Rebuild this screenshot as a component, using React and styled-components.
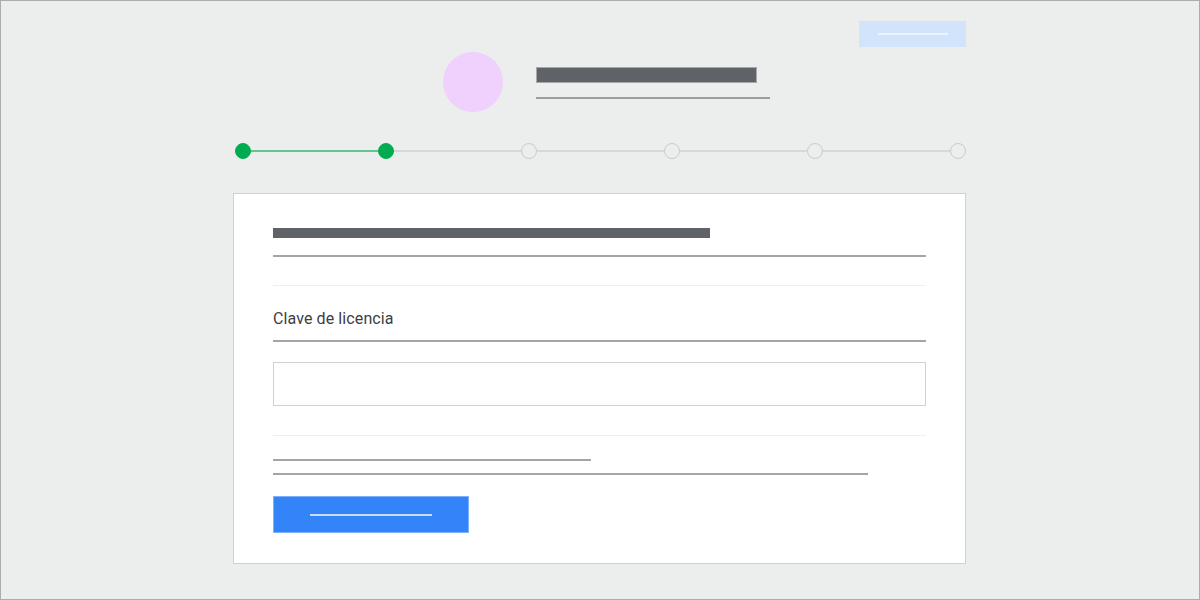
import React from "react";
import styled, { createGlobalStyle } from "styled-components";

const GlobalStyle = createGlobalStyle`
  * { box-sizing: border-box; }
  html, body { margin: 0; padding: 0; }
  body {
    background: #eceeed;
    font-family: Roboto, "Liberation Sans", Arial, sans-serif;
  }
`;

const Frame = styled.div`
  width: 1200px;
  height: 600px;
  border: 1px solid #a9adad;
  background: #eceeed;
  overflow: hidden;
`;

const Column = styled.div`
  width: 733px;
  margin-left: 232px;
  padding-top: 20px;
  display: flex;
  flex-direction: column;
`;

const TopBar = styled.div`
  display: flex;
  justify-content: flex-end;
  height: 26px;
`;

const GhostButton = styled.div`
  width: 107px;
  height: 26px;
  background: #d2e3fc;
  display: flex;
  align-items: center;
  justify-content: center;
`;

const Stroke = styled.div`
  width: ${(p) => p.$w}px;
  height: ${(p) => p.$h || 1}px;
  background: ${(p) => p.$c};
`;

const Header = styled.div`
  margin-top: 5px;
  height: 60px;
  display: flex;
  align-items: center;
  justify-content: center;
  gap: 33px;
  padding-left: 14px;
`;

const Avatar = styled.div`
  width: 60px;
  height: 60px;
  border-radius: 50%;
  background: #f0d0fc;
`;

const HeaderText = styled.div`
  display: flex;
  flex-direction: column;
  gap: 14px;
  padding-top: 1px;
`;

const TitleBar = styled.div`
  width: 221px;
  height: 16px;
  background: #5f6368;
  border: 1px solid #a4a8ac;
`;

const Stepper = styled.div`
  margin-top: 31px;
  height: 16px;
  display: flex;
  align-items: center;
  padding: 0 0 0 2px;
`;

const Dot = styled.div`
  width: 16px;
  height: 16px;
  border-radius: 50%;
  flex-shrink: 0;
  background: ${(p) => (p.$done ? "#00ac4f" : "#eceeed")};
  border: 1.5px solid ${(p) => (p.$done ? "#00ac4f" : "#c9cbcc")};
`;

const Link = styled.div`
  flex: 1;
  height: 2px;
  background: ${(p) => (p.$done ? "#62c58c" : "#d6d8d8")};
`;

const Card = styled.div`
  margin-top: 34px;
  height: 371px;
  background: #ffffff;
  border: 1px solid #cdd1d1;
  padding: 34px 39px 0 39px;
  display: flex;
  flex-direction: column;
`;

const HeadingBar = styled.div`
  width: 437px;
  height: 10px;
  background: #5f6368;
`;

const Rule = styled.div`
  height: ${(p) => p.$h || 2}px;
  width: ${(p) => (p.$w ? `${p.$w}px` : "100%")};
  background: ${(p) => p.$c || "#a2a6aa"};
  margin-top: ${(p) => p.$mt || 0}px;
`;

const Label = styled.div`
  margin-top: 23px;
  font-size: 16px;
  line-height: 20px;
  color: #3c4043;
  letter-spacing: 0.1px;
`;

const Input = styled.div`
  margin-top: 20px;
  width: 653px;
  height: 44px;
  border: 1px solid #cfd2d3;
  background: #fff;
`;

const PrimaryButton = styled.div`
  margin-top: 21px;
  width: 196px;
  height: 37px;
  background: #3284f8;
  border: 1px solid #7fb0fb;
  display: flex;
  align-items: center;
  justify-content: center;
`;

const steps = [true, true, false, false, false, false];

export default function App() {
  return (
    <>
      <GlobalStyle />
      <Frame>
        <Column>
          <TopBar>
            <GhostButton>
              <Stroke $w={70} $h={2} $c="#eef3fb" />
            </GhostButton>
          </TopBar>

          <Header>
            <Avatar />
            <HeaderText>
              <TitleBar />
              <Stroke $w={234} $h={2} $c="#9a9ea2" />
            </HeaderText>
          </Header>

          <Stepper>
            {steps.map((done, i) => (
              <React.Fragment key={i}>
                {i > 0 && <Link $done={done && steps[i - 1]} />}
                <Dot $done={done} />
              </React.Fragment>
            ))}
          </Stepper>

          <Card>
            <HeadingBar />
            <Rule $mt={17} />
            <Rule $mt={28} $h={1} $c="#eeefef" />
            <Label>Clave de licencia</Label>
            <Rule $mt={11} />
            <Input />
            <Rule $mt={29} $h={1} $c="#eeefef" />
            <Rule $mt={23} $w={318} />
            <Rule $mt={12} $w={595} />
            <PrimaryButton>
              <Stroke $w={122} $h={2} $c="#c9dcfb" />
            </PrimaryButton>
          </Card>
        </Column>
      </Frame>
    </>
  );
}
